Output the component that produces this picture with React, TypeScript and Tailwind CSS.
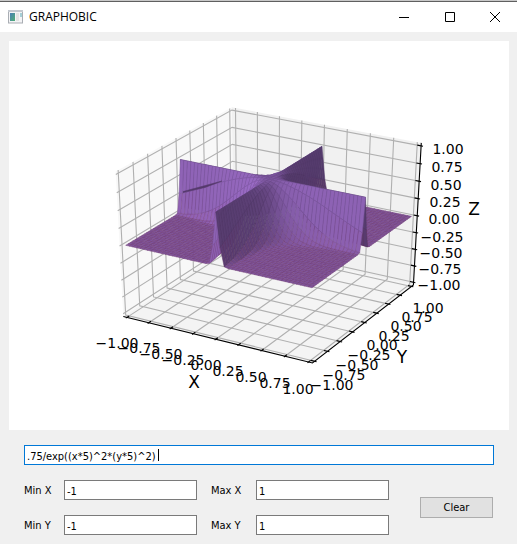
import React from "react";

type Vec = [number, number, number];

/* ---- camera ---- */

const L = 25 / 24; // axis limit: the data range plus its margin

function depth([x, y, z]: Vec) {
  return 1 - 0.02183 * x + 0.03697 * y - 0.02506 * z;
}

function project(p: Vec): [number, number] {
  const [x, y, z] = p;
  const w = depth(p);
  return [
    260 + (100 * (0.10757 + 0.90594 * x + 0.52415 * y - 0.00106 * z)) / w,
    230 + (100 * (0.00603 + 0.19629 * x - 0.34093 * y - 0.6888 * z)) / w,
  ];
}

function toPoints(...ps: Vec[]) {
  return ps.map((p) => project(p).map((n) => n.toFixed(2)).join(",")).join(" ");
}

/* ---- surface z = .75 / exp((5x)^2 (5y)^2) ---- */

const STEPS = 50;
const BASE = [148, 103, 189];
const LIGHT: Vec = [-0.667, -0.667, 0.333];

const f = (x: number, y: number) => 0.75 * Math.exp(-((x * 5) ** 2) * (y * 5) ** 2);
const at = (i: number) => -1 + (2 * i) / STEPS;

function buildSurface() {
  const cells: { d: number; points: string; fill: string; stroke: string }[] = [];
  for (let i = 0; i < STEPS; i++) {
    for (let j = 0; j < STEPS; j++) {
      const [x0, x1, y0, y1] = [at(i), at(i + 1), at(j), at(j + 1)];
      const a: Vec = [x0, y0, f(x0, y0)];
      const b: Vec = [x1, y0, f(x1, y0)];
      const c: Vec = [x1, y1, f(x1, y1)];
      const e: Vec = [x0, y1, f(x0, y1)];
      const h = x1 - x0;
      const gx = (b[2] + c[2] - a[2] - e[2]) / (2 * h);
      const gy = (c[2] + e[2] - a[2] - b[2]) / (2 * h);
      const len = Math.hypot(gx, gy, 1);
      const dot = (-gx * LIGHT[0] - gy * LIGHT[1] + LIGHT[2]) / len;
      const k = 0.765 + 0.28 * dot;
      const z = (a[2] + b[2] + c[2] + e[2]) / 4;
      const red = Math.max(0, 0.36 - z);
      const fill = BASE.map((v, n) => v * k * (1 - red * 0.2) + [120, 35, 90][n] * red * 0.2);
      const stroke = fill.map((v, n) => v * 0.87 * (1 - red) + [125, 42, 85][n] * red);
      cells.push({
        d: depth([(x0 + x1) / 2, (y0 + y1) / 2, z]),
        points: toPoints(a, b, c, e),
        fill: `rgb(${fill.map(Math.round).join(",")})`,
        stroke: `rgb(${stroke.map(Math.round).join(",")})`,
      });
    }
  }
  return cells.sort((p, q) => q.d - p.d);
}

const SURFACE = buildSurface();

/* ---- axes ---- */

const TICKS = [-1, -0.75, -0.5, -0.25, 0, 0.25, 0.5, 0.75, 1];
const label = (v: number) => (v < 0 ? "\u2212" : "") + Math.abs(v).toFixed(2);

const X_POS = [[117, 348], [139, 353], [161, 359], [183, 365], [206, 370], [228, 376], [251, 382], [275, 388], [298, 394]];
const Y_POS = [[332, 390], [344, 380], [357, 370], [369, 360], [382, 350], [394, 341], [406, 331], [417, 322], [428, 313]];
const Z_POS = [[439, 290], [440, 274], [441, 258], [442, 242], [444, 224], [445, 207], [446, 190], [447, 172], [448, 154]];

function Labels({ at: places }: { at: number[][] }) {
  return (
    <>
      {places.map(([x, y], i) => (
        <text key={i} x={x} y={y} textAnchor="middle">
          {label(TICKS[i])}
        </text>
      ))}
    </>
  );
}

function Plot() {
  return (
    <svg
      viewBox="9 41 500 389"
      className="block w-full bg-white font-['DejaVu_Sans',sans-serif] text-[14px]"
      role="img"
      aria-label="Surface plot"
    >
      <polygon points={toPoints([-L, -L, -L], [-L, L, -L], [-L, L, L], [-L, -L, L])} fill="#f8f8f8" />
      <polygon points={toPoints([-L, L, -L], [L, L, -L], [L, L, L], [-L, L, L])} fill="#f1f1f1" />
      <polygon points={toPoints([-L, -L, -L], [L, -L, -L], [L, L, -L], [-L, L, -L])} fill="#f4f4f4" />
      <g fill="none" stroke="#b0b0b0" strokeWidth="1.1">
        {TICKS.map((t) => (
          <React.Fragment key={t}>
            <polyline points={toPoints([t, -L, -L], [t, L, -L], [t, L, L])} />
            <polyline points={toPoints([L, t, -L], [-L, t, -L], [-L, t, L])} />
            <polyline points={toPoints([-L, -L, t], [-L, L, t], [L, L, t])} />
          </React.Fragment>
        ))}
      </g>
      <g fill="none" stroke="#000" strokeWidth="1.1">
        <polyline points={toPoints([-L, -L, -L], [L, -L, -L], [L, L, -L], [L, L, L])} />
        {TICKS.map((t) => (
          <React.Fragment key={t}>
            <polyline points={toPoints([t, -L - 0.02, -L], [t, -L + 0.04, -L])} />
            <polyline points={toPoints([L + 0.02, t, -L], [L - 0.04, t, -L])} />
            <polyline points={toPoints([L + 0.02, L, t], [L - 0.04, L, t])} />
          </React.Fragment>
        ))}
      </g>
      <g strokeWidth="0.5" strokeLinejoin="round">
        {SURFACE.map((c, i) => (
          <polygon key={i} points={c.points} fill={c.fill} stroke={c.stroke} />
        ))}
      </g>
      <path d="M183 191.500 L222 181 L205 187.500 L183 192.500 Z" fill="#54396b" stroke="#54396b" strokeWidth="0.5" />
      <Labels at={X_POS} />
      <Labels at={Y_POS} />
      <Labels at={Z_POS} />
      <g fontSize="17" textAnchor="middle">
        <text x="194" y="388">X</text>
        <text x="402" y="363">Y</text>
        <text x="474" y="215">Z</text>
      </g>
    </svg>
  );
}

/* ---- window ---- */

function TitleBar() {
  return (
    <header className="flex h-8 items-center border-t border-[#c8c8c8] bg-white shadow-[inset_0_1px_0_#5f5f5f]">
      <svg className="ml-2 mr-1.5 h-[14px] w-[15px] shrink-0" viewBox="0 0 15 14">
        <defs>
          <linearGradient id="pane" x1="0" y1="0" x2="1" y2="1">
            <stop offset="0" stopColor="#4a7fb5" />
            <stop offset="1" stopColor="#4fae74" />
          </linearGradient>
        </defs>
        <rect x="0.5" y="0.500" width="14" height="12.500" fill="#f4f4f6" stroke="#a9adb3" />
        <path d="M0 1h15" stroke="#c3c8cf" strokeWidth="2" />
        <rect x="2" y="3" width="5" height="8" fill="url(#pane)" />
        <rect x="8" y="3" width="3" height="8" fill="#e3e3e3" />
        <rect x="12" y="3" width="2" height="4" fill="#a5cfd6" />
      </svg>
      <h1 className="flex-1 font-['Open_Sans','Noto_Sans',sans-serif] text-[12px] text-black">GRAPHOBIC</h1>
      <button type="button" aria-label="Minimize" className="grid h-full w-[46px] place-items-center">
        <svg width="10" height="10" viewBox="0 0 10 10"><path d="M0 5.500h10" stroke="#000" /></svg>
      </button>
      <button type="button" aria-label="Maximize" className="grid h-full w-[45px] place-items-center">
        <svg width="10" height="10" viewBox="0 0 10 10"><path d="M.5.5h9v9h-9z" fill="none" stroke="#000" /></svg>
      </button>
      <button type="button" aria-label="Close" className="grid h-full w-[45px] place-items-center">
        <svg width="10" height="10" viewBox="0 0 10 10"><path d="M0 0l10 10M10 0L0 10" stroke="#000" /></svg>
      </button>
    </header>
  );
}

function Field({ id, name, value }: { id: string; name: string; value: string }) {
  return (
    <>
      <label htmlFor={id} className="pt-0.5">{name}</label>
      <input id={id} defaultValue={value} className="h-5 w-full border border-[#7a7a7a] bg-white px-0.5 pt-0.5 outline-none" />
    </>
  );
}

export default function App() {
  return (
    <div className="flex min-h-screen flex-col bg-[#f0f0f0] text-black">
      <TitleBar />
      <main className="flex flex-col pl-[9px] pr-2 pt-[9px]">
        <Plot />
        <form className="flex flex-col px-[15px] pt-[15px] font-['DejaVu_Sans_Condensed','Noto_Sans',sans-serif] text-[11px] leading-[16px]">
          <div className="relative">
            <input
              aria-label="Formula"
              defaultValue=".75/exp((x*5)^2*(y*5)^2)"
              className="block h-5 w-full border border-[#0078d7] bg-white px-0.5 pt-0.5 outline-none"
            />
            <span className="absolute left-[134px] top-1 h-3 w-px bg-black" />
          </div>
          <div className="mr-px mt-[15px] flex items-center">
            <div className="grid flex-1 grid-cols-[40px_1fr_59px_1fr] items-center gap-y-[15px] [&>label:nth-of-type(even)]:pl-[14px]">
              <Field id="minx" name="Min X" value="-1" />
              <Field id="maxx" name="Max X" value="1" />
              <Field id="miny" name="Min Y" value="-1" />
              <Field id="maxy" name="Max Y" value="1" />
            </div>
            <button type="button" className="ml-[31px] h-[21px] w-[73px] border border-[#adadad] bg-[#e1e1e1]">
              Clear
            </button>
          </div>
        </form>
      </main>
    </div>
  );
}
